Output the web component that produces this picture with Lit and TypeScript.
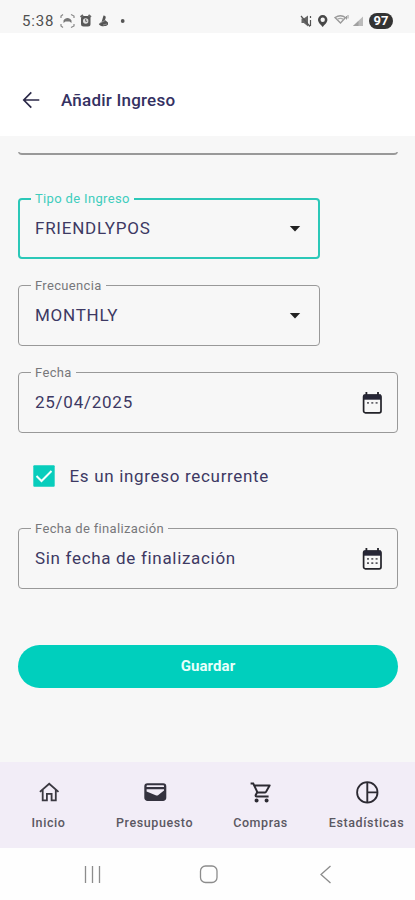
import { LitElement, html, css, svg } from "lit";
import { customElement, property } from "lit/decorators.js";
import { classMap } from "lit/directives/class-map.js";

@customElement("outlined-field")
class OutlinedField extends LitElement {
  @property() label = "";
  @property() value = "";
  @property() kind: "select" | "date" = "select";
  @property({ type: Boolean }) active = false;
  @property({ type: Boolean }) days = false;

  static styles = css`
    :host { display: block; }
    .box {
      position: relative; box-sizing: border-box; height: 61px;
      border: 1px solid #999; border-radius: 4px; padding: 0 14px 0 16px;
      display: flex; align-items: center; justify-content: space-between;
    }
    .box.active { border: 2px solid #2bc8b8; padding: 0 13px 0 15px; }
    .label {
      position: absolute; left: 12px; top: -8px; padding: 0 4px; background: #f7f7f7;
      font-size: 13px; line-height: 15px; letter-spacing: 0.34px; color: #77777b; white-space: nowrap;
    }
    .active .label { left: 11px; top: -9px; color: #40cdbd; }
    .value { font-size: 17px; line-height: 22px; letter-spacing: 0.75px; color: #3d3963; padding-bottom: 2px; }
    .value.phrase { letter-spacing: 0.68px; }
    svg { display: block; }
    .caret { margin-right: 4px; }
  `;

  render() {
    return html`
      <div class=${classMap({ box: true, active: this.active })}>
        <span class="label">${this.label}</span>
        <span class=${classMap({ value: true, phrase: this.days })}>${this.value}</span>
        ${this.kind === "select"
          ? html`<svg class="caret" width="12" height="6" viewBox="0 0 12 6"><path d="M.8 0h10.4L6 5.6z" fill="#222"/></svg>`
          : html`<svg width="22" height="24" viewBox="0 0 22 24">
              <path d="M5.400 1v4M17 1v4" stroke="#222228" stroke-width="1.800"/>
              <rect x="2.600" y="4" width="17.400" height="17.800" rx="1.800" fill="none" stroke="#222228" stroke-width="1.700"/>
              <path d="M2.600 3.500H20V8.700H2.600z" fill="#262636"/>
              <path d="M6 11.800h2M10.300 11.800h2M14.600 11.800h2" stroke="#66666c" stroke-width="1.700"/>
              ${this.days ? svg`<path d="M6 16.200h2M10.300 16.200h2M14.600 16.200h2" stroke="#55555c" stroke-width="1.700"/>` : ""}
            </svg>`}
      </div>`;
  }
}

@customElement("app-root")
class AppRoot extends LitElement {
  static styles = css`
    :host {
      display: flex; flex-direction: column; width: 415px; height: 900px; overflow: hidden;
      background: #f7f7f7; font-family: Roboto, "Noto Sans", sans-serif;
    }
    svg { display: block; }
    .status { height: 33px; flex: none; box-sizing: border-box; padding: 8px 22px 0 22px; display: flex; justify-content: space-between; }
    .group { display: flex; align-items: center; height: 25px; }
    .time { font-size: 15px; letter-spacing: 0.8px; color: #505050; width: 38px; }
    .battery {
      width: 24px; height: 16px; border-radius: 8px; background: #333; color: #fff;
      font-size: 13px; line-height: 16px; font-weight: 700; text-align: center;
    }
    .header { height: 103px; flex: none; box-sizing: border-box; padding: 30px 21px 0 21px; background: #fff; display: flex; align-items: center; gap: 20px; }
    .title { font-size: 17px; font-weight: 500; line-height: 24px; letter-spacing: 0.22px; color: #343162; }
    .form { flex: 1; padding: 0 17px 0 18px; }
    .tail { height: 19px; box-sizing: border-box; overflow: hidden; display: flex; align-items: flex-end; }
    .edge { flex: 1; height: 30px; flex-shrink: 0; border: 1px solid #999; border-bottom-width: 2px; border-radius: 4px; box-sizing: border-box; clip-path: inset(27px 0 0 0); }
    .first { margin-top: 43px; width: 302px; }
    .second { margin-top: 26px; width: 302px; }
    .third { margin-top: 26px; }
    .check { margin: 32px 0 0 15px; height: 22px; display: flex; align-items: center; gap: 14.5px; font-size: 17px; letter-spacing: 0.68px; color: #3d3963; }
    .last { margin-top: 41px; }
    .save {
      margin-top: 56px; height: 43px; border-radius: 22px; background: #00cfbd; color: #e8fffb;
      font-size: 15px; font-weight: 700; line-height: 43px; letter-spacing: 0.1px; text-align: center;
    }
    .tabs { height: 86px; flex: none; background: #f2edf7; display: flex; margin-left: -4.5px; }
    .tab { width: 106px; flex: none; display: flex; flex-direction: column; align-items: center; padding-top: 18px; }
    .tab span { margin-top: 11px; font-size: 12.5px; line-height: 16px; font-weight: 500; letter-spacing: 0.6px; color: #5b5862; white-space: nowrap; }
    .system { height: 52px; flex: none; background: #fefefe; display: flex; padding-left: 34px; }
    .system div { width: 116.5px; display: flex; justify-content: center; }
  `;

  tabs = [
    { name: "Inicio", icon: svg`<path d="M2.900 11.900 12.200 3.700l9.300 8.200M5.700 10v10.300h4.200v-6.500h4.700v6.500h4.200V10" fill="none" stroke="#3a3840" stroke-width="1.800"/>` },
    { name: "Presupuesto", icon: svg`<path fill-rule="evenodd" fill="#35333f" d="M4.800 3.200h15A3.300 3.300 0 0 1 23.300 6.500v11A3.300 3.300 0 0 1 19.800 21h-15A3.300 3.300 0 0 1 1.300 17.500v-11A3.300 3.300 0 0 1 4.800 3.200zM4.600 5.200c-.6 0-1 .4-1 1v.8h17.400v-.8c0-.6-.4-1-1-1zM3.600 9.300v2.200l9.700 4c.6.200 1.200 0 1.700-.3l6-4.700v-1.200z"/>` },
    { name: "Compras", icon: svg`<path fill="#2c2a32" d="M15.550 13c.75 0 1.410-.41 1.750-1.030l3.580-6.490A.996.996 0 0 0 20.010 4H5.210l-.94-2H1v2h2l3.600 7.590-1.350 2.440C4.520 15.370 5.480 17 7 17h12v-2H7l1.100-2zM6.160 6h12.150l-2.760 5H8.530zM7 18c-1.100 0-1.990.9-1.990 2S5.900 22 7 22s2-.9 2-2-.9-2-2-2m10 0c-1.100 0-1.990.9-1.990 2s.89 2 1.990 2 2-.9 2-2-.9-2-2-2" transform="translate(.6 .4)"/>` },
    { name: "Estadísticas", icon: svg`<circle cx="12.300" cy="12.400" r="10.200" fill="none" stroke="#2c2a32" stroke-width="1.800"/><path d="M12.300 2.400v20M12.300 12.400h10" stroke="#2c2a32" stroke-width="1.900"/>` },
  ];

  render() {
    return html`
      <div class="status">
        <div class="group">
          <span class="time">5:38</span>
          <svg width="68" height="16" viewBox="0 0 68 16">
            <path d="M1 5V3l2-1.500M11 1.500 14 3v2M1 11v2l2 1.500M14 11v2l-3 1.500" fill="none" stroke="#888" stroke-width="1.200"/>
            <path d="M3.500 10V7.500C5 4 10 4 11.500 7.500V10L9.500 8.500h-4z" fill="#777"/>
            <path d="m20.500 4 2.500-2M31 4l-2.500-2" stroke="#666" stroke-width="1.800"/>
            <rect x="21" y="3" width="9.500" height="10.500" rx="2.500" fill="#575757"/>
            <circle cx="25.700" cy="8" r="2.700" fill="#ddd"/><path d="M25.700 6v2.300h1.500" stroke="#666" fill="none"/>
            <path d="M43.500 2.500a2 2 0 0 1 2.200 2.300l-.7 2.200 3 2.500v2c-1.500 2-3 1.200-4.500 1.800-2 0-4-.8-4.700-2.300l2.800-2z" fill="#555"/>
            <path d="m40 10 5-2.500M43 12l4-1" stroke="#aaa" stroke-width=".7"/>
            <circle cx="62.700" cy="8" r="1.900" fill="#555"/>
          </svg>
        </div>
        <div class="group">
          <svg width="69" height="16" viewBox="0 0 69 16">
            <path d="M1.500 5.500h2.300L8 2.500v11L3.800 10H1.500z" fill="#666"/>
            <path d="m1 3 9 10.500M10.500 3v2M10.500 7v6" stroke="#555" stroke-width="1.200"/>
            <path fill-rule="evenodd" fill="#484848" d="M22.700 2a4.700 4.700 0 0 0-4.700 4.700c0 3 3 5 4.700 7.300 1.700-2.300 4.700-4.300 4.700-7.300A4.700 4.700 0 0 0 22.700 2m0 2.500a2.200 2.200 0 1 1 0 4.400 2.200 2.200 0 0 1 0-4.400"/>
            <path d="M35 4.500c4-2.500 7-2.500 10.500 0L40.500 10z" fill="none" stroke="#999" stroke-width="1.300"/><path d="M37 6.500c2.500-1.500 4.500-1.500 6.500 0" fill="none" stroke="#aaa" stroke-width="1.200"/>
            <path d="M46.500 3v3.500M48 2v3.500" stroke="#999"/>
            <path d="m53 13 10-9.500V13z" fill="#bbb"/><path d="m53 13 5.500-5v5z" fill="#a0a0a0"/>
          </svg>
          <span class="battery">97</span>
        </div>
      </div>
      <div class="header">
        <svg width="20" height="18" viewBox="0 0 20 18"><path d="M18.300 9H3M10.300 1.400 2.800 9l7.500 7.600" fill="none" stroke="#2b2948" stroke-width="1.700"/></svg>
        <span class="title">Añadir Ingreso</span>
      </div>
      <div class="form">
        <div class="tail"><div class="edge"></div></div>
        <outlined-field class="first" label="Tipo de Ingreso" value="FRIENDLYPOS" active></outlined-field>
        <outlined-field class="second" label="Frecuencia" value="MONTHLY"></outlined-field>
        <outlined-field class="third" label="Fecha" value="25/04/2025" kind="date"></outlined-field>
        <div class="check">
          <svg width="22" height="22" viewBox="0 0 22 22"><rect x=".3" y=".3" width="21.400" height="21.400" rx="1" fill="#08cdbc"/><path d="m3.500 11 5 5L18.500 6" fill="none" stroke="#f4fffd" stroke-width="2"/></svg>
          <span>Es un ingreso recurrente</span>
        </div>
        <outlined-field class="last" label="Fecha de finalización" value="Sin fecha de finalización" kind="date" days></outlined-field>
        <div class="save">Guardar</div>
      </div>
      <div class="tabs">
        ${this.tabs.map((t) => html`<div class="tab"><svg width="24" height="24" viewBox="0 0 24 24">${t.icon}</svg><span>${t.name}</span></div>`)}
      </div>
      <div class="system">
        <div><svg width="20" height="52" viewBox="0 0 20 52"><path d="M3.500 18v17M10.500 18v17M17.500 18v17" stroke="#8c8c8c" stroke-width="1.300"/></svg></div>
        <div><svg width="20" height="52" viewBox="0 0 20 52"><rect x="1.500" y="18" width="16.500" height="16.500" rx="5" fill="none" stroke="#8c8c8c" stroke-width="1.300"/></svg></div>
        <div><svg width="20" height="52" viewBox="0 0 20 52"><path d="m15.500 18-9.500 8.500 9.500 8.500" fill="none" stroke="#8c8c8c" stroke-width="1.300"/></svg></div>
      </div>`;
  }
}
